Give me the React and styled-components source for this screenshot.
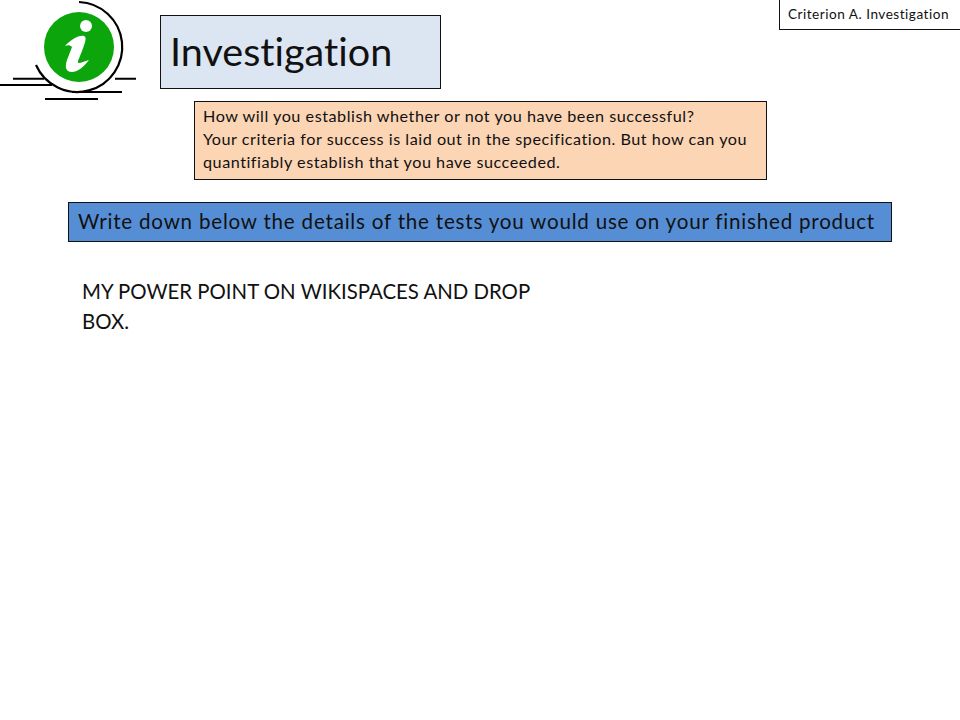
import React from "react";
import styled, { createGlobalStyle } from "styled-components";

const GlobalStyle = createGlobalStyle`
  html, body {
    margin: 0;
    padding: 0;
    background: #fff;
  }
`;

const Slide = styled.div`
  width: 960px;
  height: 720px;
  overflow: hidden;
  font-family: "Lato", "Liberation Sans", sans-serif;
  font-variant-ligatures: none;
  color: #111;
`;

const Header = styled.header`
  display: flex;
  align-items: flex-start;
  height: 101px;
`;

const IconSlot = styled.svg`
  flex: none;
  width: 137px;
  height: 101px;
  margin-right: 23px;
`;

const TitleBox = styled.div`
  box-sizing: border-box;
  width: 281px;
  height: 74px;
  margin-top: 15px;
  padding: 0 0 4px 9px;
  display: flex;
  align-items: center;
  background: #dce6f2;
  border: 1px solid #111;
  font-size: 39.6px;
`;

const CriterionBox = styled.div`
  box-sizing: border-box;
  width: 181px;
  height: 30px;
  margin-left: auto;
  padding: 0 0 1px 8px;
  display: flex;
  align-items: center;
  border: 1px solid #111;
  border-right: none;
  border-top: none;
  font-size: 13.6px;
  white-space: nowrap;
  letter-spacing: 0.5px;
`;

const Hint = styled.div`
  box-sizing: border-box;
  width: 573px;
  height: 79px;
  margin-left: 194px;
  padding: 2px 8px;
  background: #fcd5b5;
  border: 1px solid #111;
  font-size: 16.2px;
  line-height: 23px;
  letter-spacing: 0.52px;
  white-space: nowrap;
`;

const Task = styled.div`
  box-sizing: border-box;
  width: 824px;
  height: 40px;
  margin: 22px 0 0 68px;
  padding: 0 0 3px 9px;
  display: flex;
  align-items: center;
  background: #558ed5;
  border: 1px solid #111;
  font-size: 20.6px;
  letter-spacing: 0.78px;
  white-space: nowrap;
`;

const Notes = styled.p`
  width: 470px;
  margin: 34px 0 0 82px;
  font-size: 20.4px;
  line-height: 30px;
`;

const InfoIcon = () => (
  <IconSlot viewBox="0 0 137 101" aria-hidden="true">
    <path
      d="M79 2A45 45 0 1 1 36 65"
      fill="none"
      stroke="#000"
      strokeWidth="2.2"
    />
    <path d="M13 78.7H44M115 78.7H136M0 85H52M72 92H122M45 99H98" stroke="#000" strokeWidth="2" />
    <circle cx="79" cy="47" r="35" fill="#0ca60c" />
    <circle cx="86" cy="26" r="6" fill="#fff" />
    <path
      d="M65 46C71 40 78 35 84 36C88 37 84 46 78 61C77 65 82 62 89 60C83 68 77 72 72 72C65 72 65 66 67 60L72 47C70 45 68 45 65 46Z"
      fill="#fff"
    />
  </IconSlot>
);

export default function App() {
  return (
    <Slide>
      <GlobalStyle />
      <Header>
        <InfoIcon />
        <TitleBox>Investigation</TitleBox>
        <CriterionBox>Criterion A. Investigation</CriterionBox>
      </Header>
      <Hint>
        How will you establish whether or not you have been successful?
        <br />
        Your criteria for success is laid out in the specification. But how can you
        <br />
        quantifiably establish that you have succeeded.
      </Hint>
      <Task>Write down below the details of the tests you would use on your finished product</Task>
      <Notes>MY POWER POINT ON WIKISPACES AND DROP BOX.</Notes>
    </Slide>
  );
}
